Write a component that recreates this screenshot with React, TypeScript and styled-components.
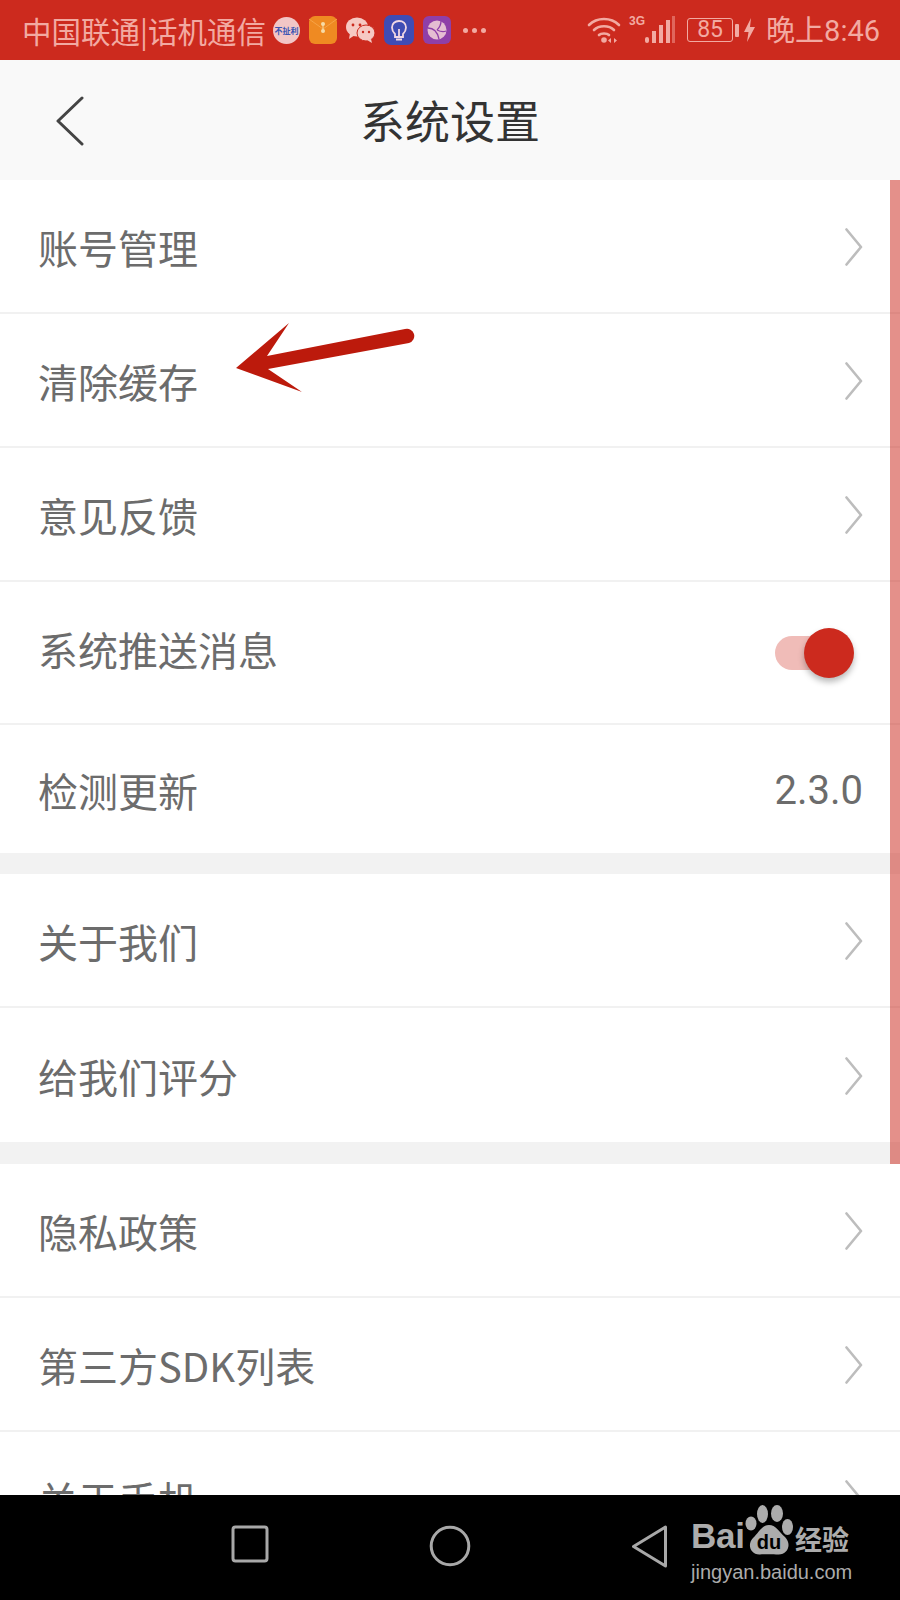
import styled, { createGlobalStyle } from 'styled-components'

const GlobalStyle = createGlobalStyle`
  html, body {
    margin: 0;
    padding: 0;
    background: #fff;
  }
  * {
    box-sizing: border-box;
  }
`

const CJK = `'Noto Sans CJK SC', 'Noto Sans', sans-serif`

const Page = styled.div`
  position: relative;
  display: flex;
  flex-direction: column;
  width: 900px;
  height: 1600px;
  overflow: hidden;
  font-family: ${CJK};
`

const StatusBar = styled.div`
  display: flex;
  flex: none;
  align-items: center;
  justify-content: space-between;
  height: 60px;
  padding: 0 20px 0 22px;
  background: #cc2a1e;
  color: #f2aaa2;
`

const StatusGroup = styled.div`
  display: flex;
  align-items: center;
`

const Carrier = styled.span`
  width: 251px;
  font-size: 29.5px;
  line-height: 60px;
  white-space: nowrap;
`

const Clock = styled.span`
  margin-left: 11px;
  padding-top: 2px;
  font-family: 'Roboto', ${CJK};
  font-size: 29px;
  line-height: 60px;
  white-space: nowrap;
`

const AppIcon = styled.svg`
  display: block;
  flex: none;
  margin-right: 9px;
`

const Dots = styled.div`
  display: flex;
  gap: 4px;
  margin-left: 3px;
`

const Dot = styled.i`
  width: 5px;
  height: 5px;
  border-radius: 50%;
  background: #f2aaa2;
`

const Network = styled.span`
  margin: -18px 0 0 8px;
  font-family: 'Liberation Sans', sans-serif;
  font-size: 12px;
  font-weight: 700;
  line-height: 12px;
`

const Battery = styled.div`
  display: flex;
  align-items: center;
  justify-content: center;
  width: 46px;
  height: 24px;
  margin-left: 12px;
  border: 1.5px solid #f2aaa2;
  border-radius: 3px;
  font-family: 'Roboto', sans-serif;
  font-size: 23px;
  line-height: 20px;
`

const BatteryCap = styled.i`
  width: 4px;
  height: 13px;
  margin-left: 2px;
  border-radius: 1px;
  background: #f2aaa2;
`

const Header = styled.header`
  display: flex;
  flex: none;
  align-items: center;
  justify-content: center;
  position: relative;
  height: 120px;
  background: #f9f9f9;
`

const BackIcon = styled.svg`
  position: absolute;
  top: 36px;
  left: 55px;
`

const Title = styled.h1`
  margin: 0;
  color: #333;
  font-size: 45px;
  font-weight: 400;
  line-height: 120px;
`

const List = styled.main`
  position: relative;
  flex: 1;
  min-height: 0;
  overflow: hidden;
  background: #fff;
`

const Row = styled.div<{ $height?: number; $flush?: boolean; $lift?: number }>`
  display: flex;
  align-items: center;
  justify-content: space-between;
  height: ${(p) => p.$height ?? 134}px;
  padding: 2px 37px ${(p) => p.$lift ?? 0}px 38px;
  border-bottom: ${(p) => (p.$flush ? 'none' : '2.5px solid #f1f1f1')};
`

const Label = styled.span`
  color: #6c6c6c;
  font-size: 40px;
  line-height: 50px;
`

const Version = styled.span`
  margin-top: 2px;
  color: #6c6c6c;
  font-family: 'Roboto', sans-serif;
  font-size: 40px;
  line-height: 50px;
`

const Gap = styled.div<{ $height: number }>`
  height: ${(p) => p.$height}px;
  background: #f2f2f2;
`

const Chevron = styled.svg`
  display: block;
  flex: none;
`

const Switch = styled.div`
  position: relative;
  flex: none;
  width: 72px;
  height: 34px;
  margin-right: 16px;
  margin-top: 9px;
  border-radius: 17px;
  background: #f0bcb8;
`

const Knob = styled.div`
  position: absolute;
  top: -8px;
  right: -7px;
  width: 50px;
  height: 50px;
  border-radius: 50%;
  background: #cc2a1e;
  box-shadow: 0 4px 6px rgba(0, 0, 0, 0.28);
`

const Scrollbar = styled.div`
  position: absolute;
  top: 0;
  right: 0;
  width: 10px;
  height: 984px;
  background: rgba(204, 42, 30, 0.52);
`

const Annotation = styled.svg`
  position: absolute;
  top: 315px;
  left: 230px;
`

const NavBar = styled.nav`
  display: flex;
  flex: none;
  position: relative;
  align-items: center;
  height: 105px;
  background: #000;
`

const NavIcon = styled.svg`
  display: block;
  position: absolute;
  top: 30px;
`

const Watermark = styled.div`
  position: absolute;
  top: 1505px;
  left: 691px;
  width: 170px;
  color: #acacac;
`

const LogoLine = styled.div`
  display: flex;
  align-items: flex-end;
  height: 50px;
`

const LogoBai = styled.span`
  width: 54px;
  font-family: 'Liberation Sans', sans-serif;
  font-size: 35px;
  font-weight: 700;
  line-height: 38px;
  letter-spacing: -0.3px;
`

const LogoCn = styled.span`
  margin-left: 2px;
  font-size: 27px;
  font-weight: 700;
  line-height: 32px;
  white-space: nowrap;
`

const LogoUrl = styled.div`
  margin-top: 4px;
  font-family: 'Liberation Sans', sans-serif;
  font-size: 20px;
  line-height: 26px;
  white-space: nowrap;
`

const ChevronRight = () => (
  <Chevron width="18" height="38" viewBox="0 0 18 38" fill="none">
    <path
      d="M1.5 1.5 L16 19 L1.5 36.5"
      stroke="#bdbdbd"
      strokeWidth="2.6"
      strokeLinecap="round"
      strokeLinejoin="round"
    />
  </Chevron>
)

const ArrowRow = ({ label, flush }: { label: string; flush?: boolean }) => (
  <Row $flush={flush}>
    <Label>{label}</Label>
    <ChevronRight />
  </Row>
)

const PaperIcon = () => (
  <AppIcon width="28" height="28" viewBox="0 0 28 28">
    <rect width="28" height="28" rx="6" fill="#ef8a22" />
    <path d="M0 3 L14 13 L28 3" fill="none" stroke="#f6a347" strokeWidth="1" />
    <circle cx="14" cy="8" r="2" fill="#f6dca8" />
    <circle cx="14" cy="15" r="2" fill="#f6dca8" />
    <path d="M14 8 V15" stroke="#f6dca8" strokeWidth="1" />
  </AppIcon>
)

const ChatIcon = () => (
  <AppIcon width="29" height="26" viewBox="0 0 29 26">
    <ellipse cx="11" cy="10" rx="11" ry="9.5" fill="#f6c9c3" />
    <path d="M4 16 L3 22 L9 18 Z" fill="#f6c9c3" />
    <ellipse cx="20" cy="16" rx="9" ry="8" fill="#f6c9c3" stroke="#cc2a1e" strokeWidth="1" />
    <path d="M25 22 L26 26 L21 23 Z" fill="#f6c9c3" />
    <circle cx="7" cy="8" r="1.4" fill="#cc2a1e" />
    <circle cx="14" cy="8" r="1.4" fill="#cc2a1e" />
    <circle cx="17" cy="15" r="1.2" fill="#cc2a1e" />
    <circle cx="23" cy="15" r="1.2" fill="#cc2a1e" />
  </AppIcon>
)

const BulbIcon = () => (
  <AppIcon width="30" height="30" viewBox="0 0 30 30">
    <rect width="30" height="30" rx="7" fill="#3f4cb4" />
    <path
      d="M11 19 C8 16 8 14 8 12.5 C8 8.5 11 6 15 6 C19 6 22 8.5 22 12.5 C22 14 22 16 19 19 V22 H11 Z"
      fill="none"
      stroke="#f1d7e4"
      strokeWidth="1.8"
    />
    <path d="M15 14 V21 M12 24.5 H18" stroke="#f1d7e4" strokeWidth="1.8" />
  </AppIcon>
)

const GlobeIcon = () => (
  <AppIcon width="28" height="28" viewBox="0 0 28 28">
    <rect width="28" height="28" rx="6" fill="#8f3fa8" />
    <circle cx="14" cy="14" r="9.5" fill="#e5bed2" />
    <path
      d="M5 12 C10 12 14 14 16 23 M14 14 C17 11 18 8 18 5 M14 14 C18 16 21 16 23 15"
      fill="none"
      stroke="#8f3fa8"
      strokeWidth="1.3"
    />
  </AppIcon>
)

const WifiIcon = () => (
  <svg width="34" height="28" viewBox="0 0 34 28" fill="none">
    <g stroke="#f2aaa2" strokeWidth="2.6" strokeLinecap="round">
      <path d="M2 9 C10 1 24 1 32 9" />
      <path d="M7 14 C12 9 22 9 27 14" />
      <path d="M12 19 C14 17 20 17 22 19" />
    </g>
    <circle cx="17" cy="24" r="2.8" fill="#f2aaa2" />
    <path d="M24 22 V27 L21 24.5 Z M27 22 V27 L30 24.5 Z" fill="#f2aaa2" />
  </svg>
)

const SignalIcon = () => (
  <svg width="30" height="28" viewBox="0 0 30 28" style={{ display: 'block' }}>
    <rect x="0" y="21" width="4" height="6" rx="2" fill="#f2aaa2" />
    <rect x="7" y="15" width="4" height="12" fill="#f2aaa2" />
    <rect x="14" y="9" width="4" height="18" fill="#f2aaa2" />
    <rect x="21" y="4" width="4" height="23" fill="#f2aaa2" />
    <rect x="27" y="0" width="3" height="27" fill="#e0665c" />
  </svg>
)

const BoltIcon = () => (
  <svg width="11" height="24" viewBox="0 0 11 24" style={{ marginLeft: 5 }}>
    <path d="M7 0 L0 14 H4.5 L3 24 L11 9 H6 Z" fill="#f2aaa2" />
  </svg>
)

const PawLogo = () => (
  <svg width="48" height="50" viewBox="0 0 48 50" style={{ flex: 'none', display: 'block' }}>
    <g fill="#acacac">
      <ellipse cx="6" cy="18.5" rx="5.5" ry="7" />
      <ellipse cx="17.5" cy="9" rx="5.5" ry="9" />
      <ellipse cx="32" cy="8.5" rx="6" ry="8.5" />
      <ellipse cx="42.5" cy="22" rx="5.5" ry="8" />
      <path d="M24 20 C31 20 33 26 40 32 C47 39 43 50 33 49.5 C28 49 20 49 15 49.5 C5 50 2 39 8 33 C14 27 17 20 24 20 Z" />
    </g>
    <text
      x="24"
      y="44"
      textAnchor="middle"
      fontFamily="Liberation Sans"
      fontSize="20"
      fontWeight="700"
      fill="#000"
    >
      du
    </text>
  </svg>
)

export default function App() {
  return (
    <Page>
      <GlobalStyle />
      <StatusBar>
        <StatusGroup>
          <Carrier>中国联通|话机通信</Carrier>
          <AppIcon width="27" height="27" viewBox="0 0 27 27">
            <circle cx="13.5" cy="13.5" r="13.5" fill="#f2c6c6" />
            <text
              x="13.5"
              y="17"
              textAnchor="middle"
              fontSize="8"
              fontWeight="700"
              fill="#3a55b4"
              fontFamily="Noto Sans CJK SC"
            >
              不扯利
            </text>
          </AppIcon>
          <PaperIcon />
          <ChatIcon />
          <BulbIcon />
          <GlobeIcon />
          <Dots>
            <Dot />
            <Dot />
            <Dot />
          </Dots>
        </StatusGroup>
        <StatusGroup>
          <WifiIcon />
          <Network>3G</Network>
          <SignalIcon />
          <Battery>85</Battery>
          <BatteryCap />
          <BoltIcon />
          <Clock>晚上8:46</Clock>
        </StatusGroup>
      </StatusBar>
      <Header>
        <BackIcon width="30" height="50" viewBox="0 0 30 50" fill="none">
          <path
            d="M27 2 L3 25 L27 48"
            stroke="#444"
            strokeWidth="3"
            strokeLinecap="round"
            strokeLinejoin="round"
          />
        </BackIcon>
        <Title>系统设置</Title>
      </Header>
      <List>
        <ArrowRow label="账号管理" />
        <ArrowRow label="清除缓存" />
        <ArrowRow label="意见反馈" />
        <Row $height={143} $lift={10}>
          <Label>系统推送消息</Label>
          <Switch>
            <Knob />
          </Switch>
        </Row>
        <Row $height={128} $flush>
          <Label>检测更新</Label>
          <Version>2.3.0</Version>
        </Row>
        <Gap $height={21} />
        <ArrowRow label="关于我们" />
        <ArrowRow label="给我们评分" flush />
        <Gap $height={22} />
        <ArrowRow label="隐私政策" />
        <ArrowRow label="第三方SDK列表" />
        <ArrowRow label="关于手机" />
        <Scrollbar />
      </List>
      <NavBar>
        <NavIcon width="38" height="38" viewBox="0 0 38 38" fill="none" style={{ left: 231 }}>
          <rect x="2" y="2" width="34" height="34" rx="2.5" stroke="#a8a8a8" strokeWidth="3" />
        </NavIcon>
        <NavIcon width="42" height="42" viewBox="0 0 42 42" fill="none" style={{ left: 429 }}>
          <circle cx="21" cy="21" r="18.8" stroke="#a8a8a8" strokeWidth="3" />
        </NavIcon>
        <NavIcon width="38" height="44" viewBox="0 0 38 44" fill="none" style={{ left: 631 }}>
          <path
            d="M34.5 2 V41 L2.5 21.5 Z"
            stroke="#a8a8a8"
            strokeWidth="3"
            strokeLinejoin="round"
          />
        </NavIcon>
      </NavBar>
      <Annotation width="190" height="82" viewBox="230 315 190 82">
        <path
          d="M236 368 L289 323 L267 356 L405 329 A7 7 0 0 1 409 343 L268 369 L302 392 Z"
          fill="#bc1a0c"
        />
      </Annotation>
      <Watermark>
        <LogoLine>
          <LogoBai>Bai</LogoBai>
          <PawLogo />
          <LogoCn>经验</LogoCn>
        </LogoLine>
        <LogoUrl>jingyan.baidu.com</LogoUrl>
      </Watermark>
    </Page>
  )
}
